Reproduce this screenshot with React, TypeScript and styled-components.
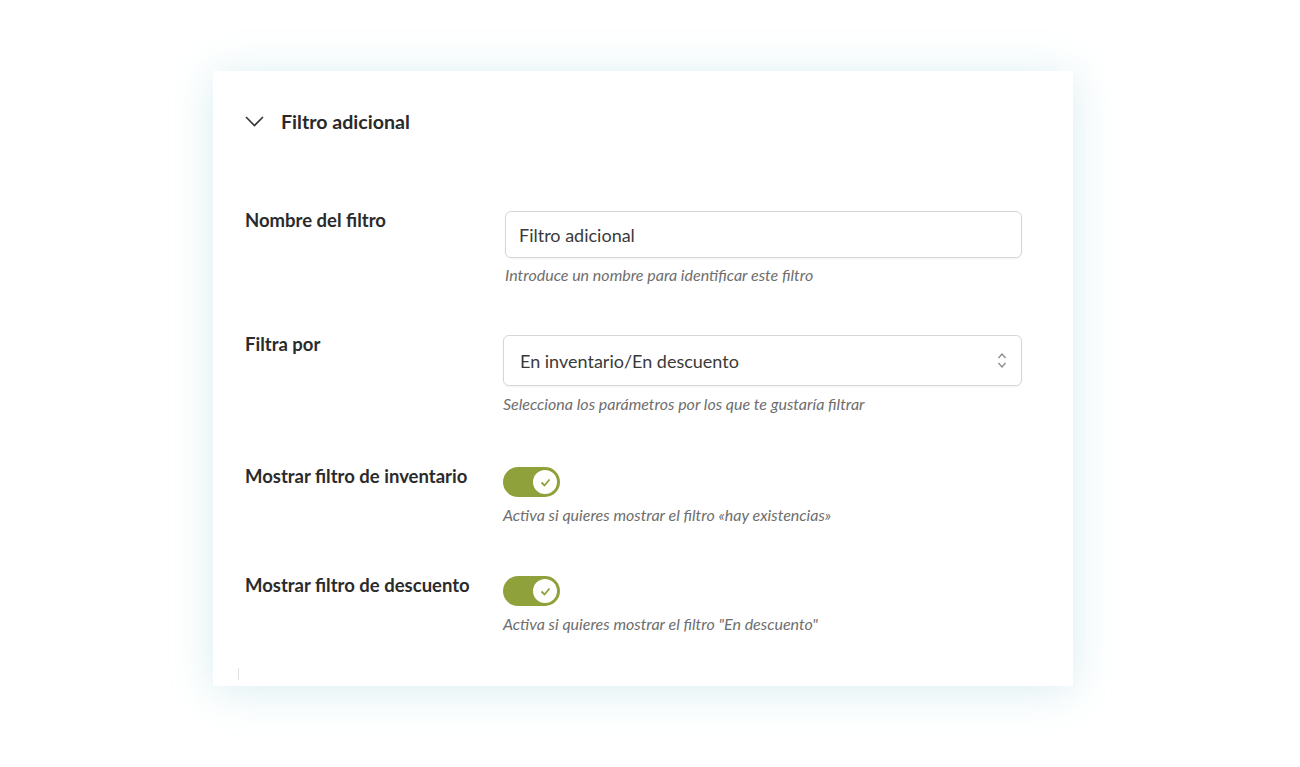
import React from "react";
import styled, { createGlobalStyle } from "styled-components";

const Global = createGlobalStyle`
  body { margin: 0; background: #fff; font-family: Lato, "Noto Sans", sans-serif; }
`;

const Page = styled.div`
  width: 1300px; height: 767px; display: flex; justify-content: flex-start;
  padding: 71px 0 0 213px; box-sizing: border-box;
`;

const Card = styled.div`
  width: 860px; height: 615px; background: #fff; box-sizing: border-box;
  box-shadow: 0 4px 40px rgba(120, 190, 200, 0.28);
  padding: 40px 51px 0 32px; position: relative;
`;

const Header = styled.div`
  display: flex; align-items: center; gap: 17px; height: 22px; margin-top: -1px;
  font-size: 19.6px; font-weight: 700; color: #2a2a2a;
`;

const Row = styled.div<{ mt: number }>`
  display: grid; grid-template-columns: 258px 1fr; margin-top: ${p => p.mt}px;
`;

const Label = styled.div`
  font-size: 18.5px; font-weight: 700; color: #2b2b2b; margin-top: -2px;
`;

const Field = styled.div<{ ml?: number }>`
  display: flex; flex-direction: column; margin-left: ${p => p.ml ?? 0}px;
`;

const Box = styled.div<{ h: number }>`
  height: ${p => p.h}px; border: 1px solid #d6d6d6; border-radius: 6px; box-sizing: border-box;
  display: flex; align-items: center; justify-content: space-between; padding: 0 14px 0 13px;
  font-size: 18px; color: #3a3a3a; box-shadow: 0 1px 2px rgba(0,0,0,0.05);
`;

const Hint = styled.div<{ mt: number }>`
  margin-top: ${p => p.mt}px; font-size: 16px; font-style: italic; color: #6e6e6e;
`;

const Toggle = styled.div`
  width: 57px; height: 30px; border-radius: 15px; background: #8fa13a; position: relative;
`;

const Knob = styled.div`
  position: absolute; right: 3px; top: 3px; width: 24px; height: 24px; border-radius: 50%;
  background: #fff; display: flex; align-items: center; justify-content: center;
`;

const Tick = styled.div`
  position: absolute; left: 25px; top: 597px; width: 1px; height: 12px; background: #e2e2e2;
`;

const Chevron = () => (
  <svg width="19" height="11" viewBox="0 0 19 11"><path d="M1 1l8.5 8.5L18 1" fill="none" stroke="#333" strokeWidth="1.6" /></svg>
);

const Check = () => (
  <svg width="11" height="9" viewBox="0 0 11 9"><path d="M1.5 4.5l3 3 5-6" fill="none" stroke="#8fa13a" strokeWidth="1.8" /></svg>
);

const Updown = () => (
  <svg width="10" height="17" viewBox="0 0 10 17"><path d="M1.5 6l3.5-4 3.5 4M1.5 11l3.5 4 3.5-4" fill="none" stroke="#8a8a8a" strokeWidth="1.3" /></svg>
);

const Switch = () => (
  <Toggle><Knob><Check /></Knob></Toggle>
);

export default function App() {
  return (
    <>
      <Global />
      <Page>
        <Card>
          <Header><Chevron />Filtro adicional</Header>
          <Row mt={79}>
            <Label>Nombre del filtro</Label>
            <Field ml={2}>
              <Box h={47}>Filtro adicional</Box>
              <Hint mt={7}>Introduce un nombre para identificar este filtro</Hint>
            </Field>
          </Row>
          <Row mt={51}>
            <Label>Filtra por</Label>
            <Field>
              <Box h={51} style={{ paddingLeft: 16 }}>En inventario/En descuento<Updown /></Box>
              <Hint mt={8}>Selecciona los parámetros por los que te gustaría filtrar</Hint>
            </Field>
          </Row>
          <Row mt={54}>
            <Label>Mostrar filtro de inventario</Label>
            <Field>
              <Switch />
              <Hint mt={8}>Activa si quieres mostrar el filtro «hay existencias»</Hint>
            </Field>
          </Row>
          <Row mt={52}>
            <Label>Mostrar filtro de descuento</Label>
            <Field>
              <Switch />
              <Hint mt={8}>Activa si quieres mostrar el filtro "En descuento"</Hint>
            </Field>
          </Row>
          <Tick />
        </Card>
      </Page>
    </>
  );
}
